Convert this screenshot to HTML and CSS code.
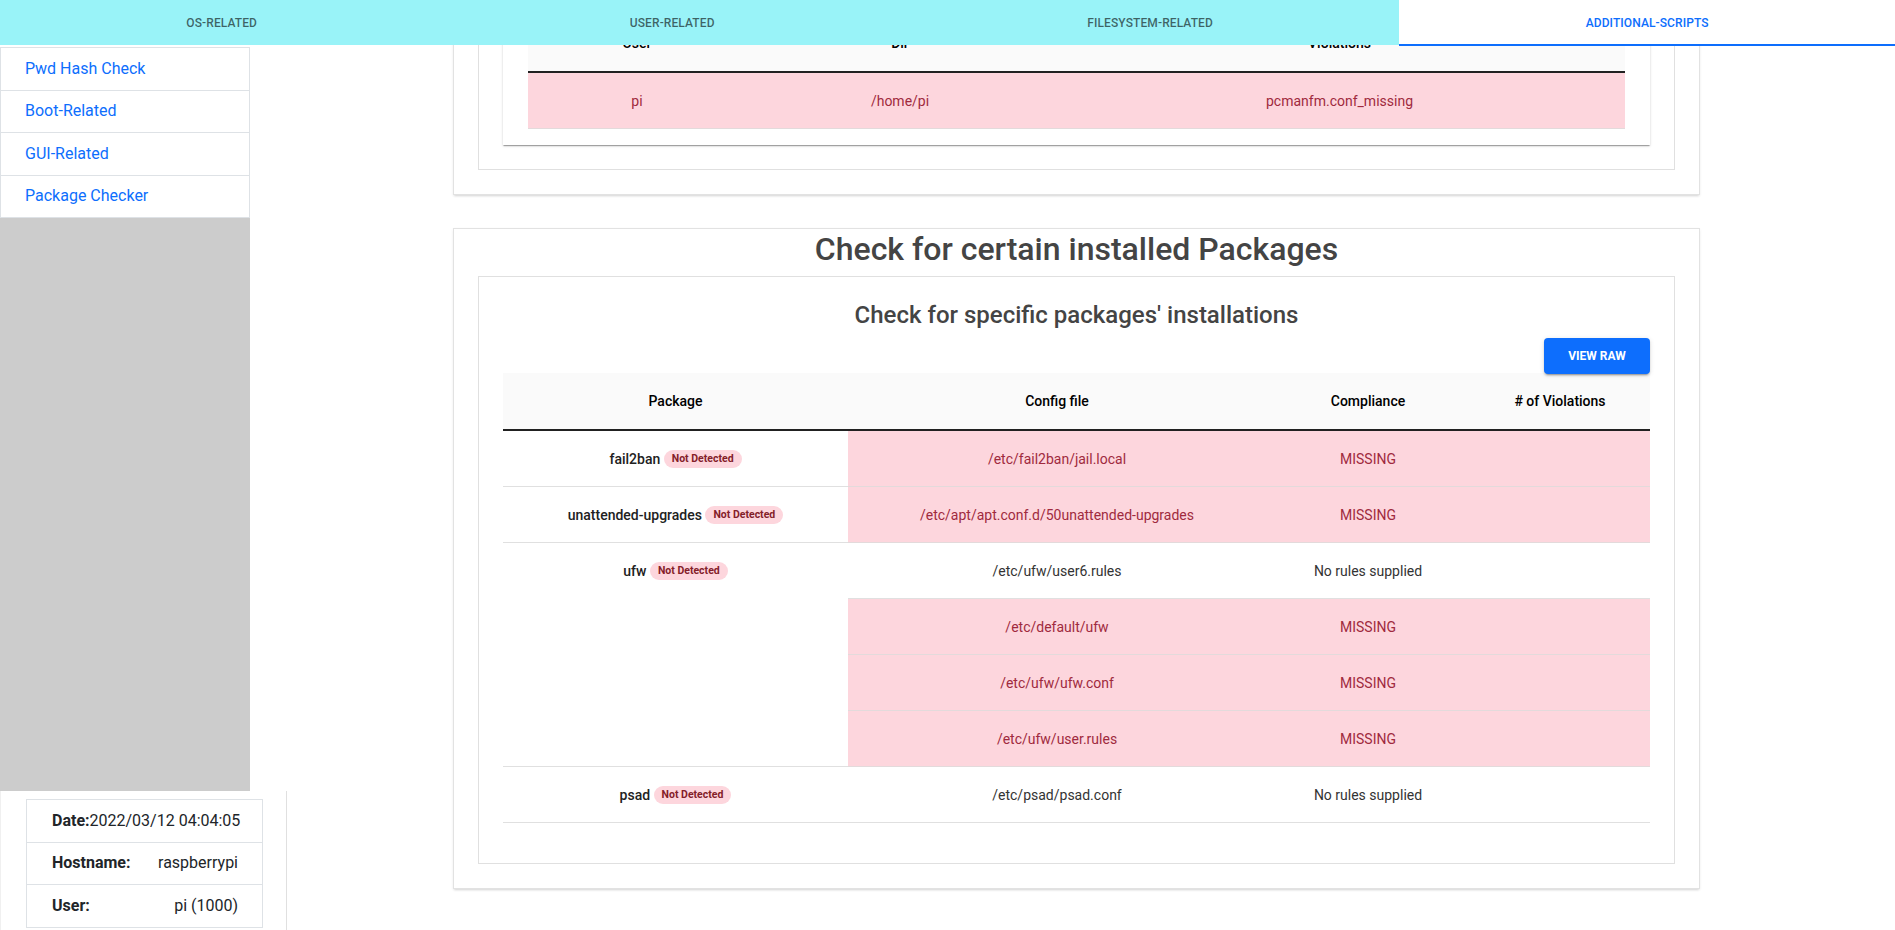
FILE: index.html
```html
<!DOCTYPE html>
<html lang="en">
<head>
<meta charset="utf-8">
<title>Audit Report - Additional Scripts</title>
<link rel="stylesheet" href="styles.css">
</head>
<body>
<header class="tabbar">
  <div class="tab">OS-RELATED</div>
  <div class="tab">USER-RELATED</div>
  <div class="tab">FILESYSTEM-RELATED</div>
  <div class="tab tab-active">ADDITIONAL-SCRIPTS</div>
</header>
<div class="layout">
  <aside class="sidebar">
    <nav class="navlist">
      <a class="navitem" href="#pwd">Pwd Hash Check</a>
      <a class="navitem" href="#boot">Boot-Related</a>
      <a class="navitem" href="#gui">GUI-Related</a>
      <a class="navitem" href="#pkg">Package Checker</a>
    </nav>
    <div class="filler"></div>
    <div class="info">
      <div class="info-table">
        <div class="info-row"><b>Date:</b>2022/03/12 04:04:05</div>
        <div class="info-row info-split"><b>Hostname:</b><span>raspberrypi</span></div>
        <div class="info-row info-split"><b>User:</b><span>pi (1000)</span></div>
      </div>
    </div>
  </aside>
  <main class="main">
    <section class="card" id="gui">
      <div class="box box-first">
        <div class="paper">
          <table class="tbl">
            <colgroup><col class="c-user"><col class="c-dir"><col></colgroup>
            <thead>
              <tr><th>User</th><th>Dir</th><th>Violations</th></tr>
            </thead>
            <tbody>
              <tr><td class="danger">pi</td><td class="danger">/home/pi</td><td class="danger">pcmanfm.conf_missing</td></tr>
            </tbody>
          </table>
        </div>
      </div>
    </section>
    <section class="card" id="pkg">
      <h2 class="card-title">Check for certain installed Packages</h2>
      <div class="box">
        <h3 class="box-title">Check for specific packages' installations</h3>
        <div class="toolbar"><button class="btn" type="button">VIEW RAW</button></div>
        <table class="tbl">
          <colgroup><col class="c-pkg"><col class="c-cfg"><col class="c-comp"><col></colgroup>
          <thead>
            <tr><th>Package</th><th>Config file</th><th>Compliance</th><th># of Violations</th></tr>
          </thead>
          <tbody>
            <tr>
              <td class="pkg">fail2ban <span class="badge">Not Detected</span></td>
              <td class="danger">/etc/fail2ban/jail.local</td><td class="danger">MISSING</td><td class="danger"></td>
            </tr>
            <tr>
              <td class="pkg">unattended-upgrades <span class="badge">Not Detected</span></td>
              <td class="danger">/etc/apt/apt.conf.d/50unattended-upgrades</td><td class="danger">MISSING</td><td class="danger"></td>
            </tr>
            <tr>
              <td class="pkg" rowspan="4">ufw <span class="badge">Not Detected</span></td>
              <td>/etc/ufw/user6.rules</td><td>No rules supplied</td><td></td>
            </tr>
            <tr><td class="danger">/etc/default/ufw</td><td class="danger">MISSING</td><td class="danger"></td></tr>
            <tr><td class="danger">/etc/ufw/ufw.conf</td><td class="danger">MISSING</td><td class="danger"></td></tr>
            <tr><td class="danger">/etc/ufw/user.rules</td><td class="danger">MISSING</td><td class="danger"></td></tr>
            <tr>
              <td class="pkg">psad <span class="badge">Not Detected</span></td>
              <td>/etc/psad/psad.conf</td><td>No rules supplied</td><td></td>
            </tr>
          </tbody>
        </table>
      </div>
    </section>
  </main>
</div>
</body>
</html>
```

FILE: styles.css
```css
html, body {
  margin: 0;
  height: 100%;
  overflow: hidden;
}
body {
  font-family: Roboto, "Liberation Sans", Arial, sans-serif;
  color: #212121;
  background: #fff;
}

/* Tabs */
.tabbar {
  position: fixed;
  top: 0;
  left: 0;
  right: 0;
  height: 45px;
  display: flex;
  background: #99f3f8;
  z-index: 10;
}
.tab {
  flex: 1 1 auto;
  display: flex;
  align-items: center;
  justify-content: center;
  font-size: 12px;
  font-weight: 500;
  letter-spacing: 0.1px;
  color: rgba(0, 0, 0, 0.6);
  position: relative;
  white-space: nowrap;
}
.tab-active {
  background: #fff;
  color: #0d6efd;
}
.tab-active::after {
  content: "";
  position: absolute;
  left: 0;
  right: 0;
  bottom: -1px;
  height: 2px;
  background: #0d6efd;
}

/* Layout */
.layout {
  display: flex;
  height: 100vh;
}
.sidebar {
  width: 250px;
  flex: none;
  display: flex;
  flex-direction: column;
  padding-top: 47px;
  box-sizing: border-box;
}
.navlist {
  display: flex;
  flex-direction: column;
  border: 1px solid #dee2e6;
}
.navitem {
  padding: 8.75px 24px;
  line-height: 24px;
  font-size: 16px;
  color: #0d6efd;
  text-decoration: none;
  border-bottom: 1px solid #dee2e6;
}
.navitem:last-child {
  border-bottom: none;
}
.filler {
  flex: 1;
  background: #cccccc;
}
.info {
  flex: none;
  width: 287px;
  height: 139px;
  box-sizing: border-box;
  padding: 8px 23px 0 25px;
  border-right: 1px solid #e0e0e0;
  border-left: 1px solid #f0f0f0;
  background: #fff;
}
.info-table {
  border: 1px solid #dee2e6;
}
.info-row {
  padding: 8.75px 24px 8.75px 25px;
  line-height: 24px;
  font-size: 16px;
  color: #212529;
  white-space: nowrap;
  border-bottom: 1px solid #dee2e6;
}
.info-row:last-child {
  border-bottom: none;
}
.info-split {
  display: flex;
  justify-content: space-between;
}

/* Main */
.main {
  flex: 1;
  min-width: 0;
}
.card {
  margin: 0 195px 0 203px;
  padding: 0 24px 24px;
  border: 1px solid #e2e2e2;
  box-shadow: 0 2px 2px -1px rgba(0, 0, 0, 0.12), 0 1px 3px rgba(0, 0, 0, 0.06);
  background: #fff;
}
.card + .card {
  margin-top: 33px;
}
.card-title {
  margin: 0 0 7px;
  font-size: 32px;
  font-weight: 500;
  line-height: 40px;
  text-align: center;
  color: #444;
}
.box {
  border: 1px solid #e0e0e0;
  padding: 23px 24px 40px;
}
.box-first {
  padding: 0 24px 24px;
}
.box-title {
  margin: 0;
  font-size: 24px;
  font-weight: 500;
  line-height: 30px;
  text-align: center;
  color: #444;
}
.paper {
  padding: 13px 25px 16px;
  box-shadow: 0 2px 1px -1px rgba(0, 0, 0, 0.2), 0 1px 1px 0 rgba(0, 0, 0, 0.14), 0 1px 3px 0 rgba(0, 0, 0, 0.12);
}
.toolbar {
  display: flex;
  justify-content: flex-end;
  margin-top: 8px;
  margin-bottom: -1px;
  position: relative;
  z-index: 1;
}
.btn {
  width: 106px;
  height: 36px;
  border: 0;
  border-radius: 4px;
  background: #0d6efd;
  color: #fff;
  font-family: Roboto, "Liberation Sans", Arial, sans-serif;
  font-size: 12px;
  font-weight: 700;
  box-shadow: 0 3px 1px -2px rgba(0, 0, 0, 0.2), 0 2px 2px 0 rgba(0, 0, 0, 0.14), 0 1px 5px 0 rgba(0, 0, 0, 0.12);
}

/* Tables */
.tbl {
  width: 100%;
  border-collapse: separate;
  border-spacing: 0;
  table-layout: fixed;
  font-size: 14px;
}
.c-user { width: 218px; }
.c-dir { width: 308px; }
.c-pkg { width: 345px; }
.c-cfg { width: 418px; }
.c-comp { width: 204px; }
.tbl th {
  background: #fafafa;
  padding: 16px;
  line-height: 24px;
  font-weight: 500;
  color: #000;
  border-bottom: 2px solid #212121;
  text-align: center;
}
.tbl td {
  padding: 15.5px 16px;
  line-height: 24px;
  border-bottom: 1px solid #e0e0e0;
  text-align: center;
  color: #333;
}
.tbl td.danger {
  background: #fdd6dd;
  color: #a02a3e;
  border-bottom-color: #e3dadb;
}
.tbl td.pkg {
  vertical-align: top;
  font-weight: 500;
  color: #212121;
  white-space: nowrap;
}
.badge {
  display: inline-block;
  padding: 4px 8px;
  border-radius: 10px;
  background: #fdd6dd;
  color: #842029;
  font-size: 10.5px;
  font-weight: 700;
  line-height: 1;
  vertical-align: middle;
  margin-top: -2px;
}
```
